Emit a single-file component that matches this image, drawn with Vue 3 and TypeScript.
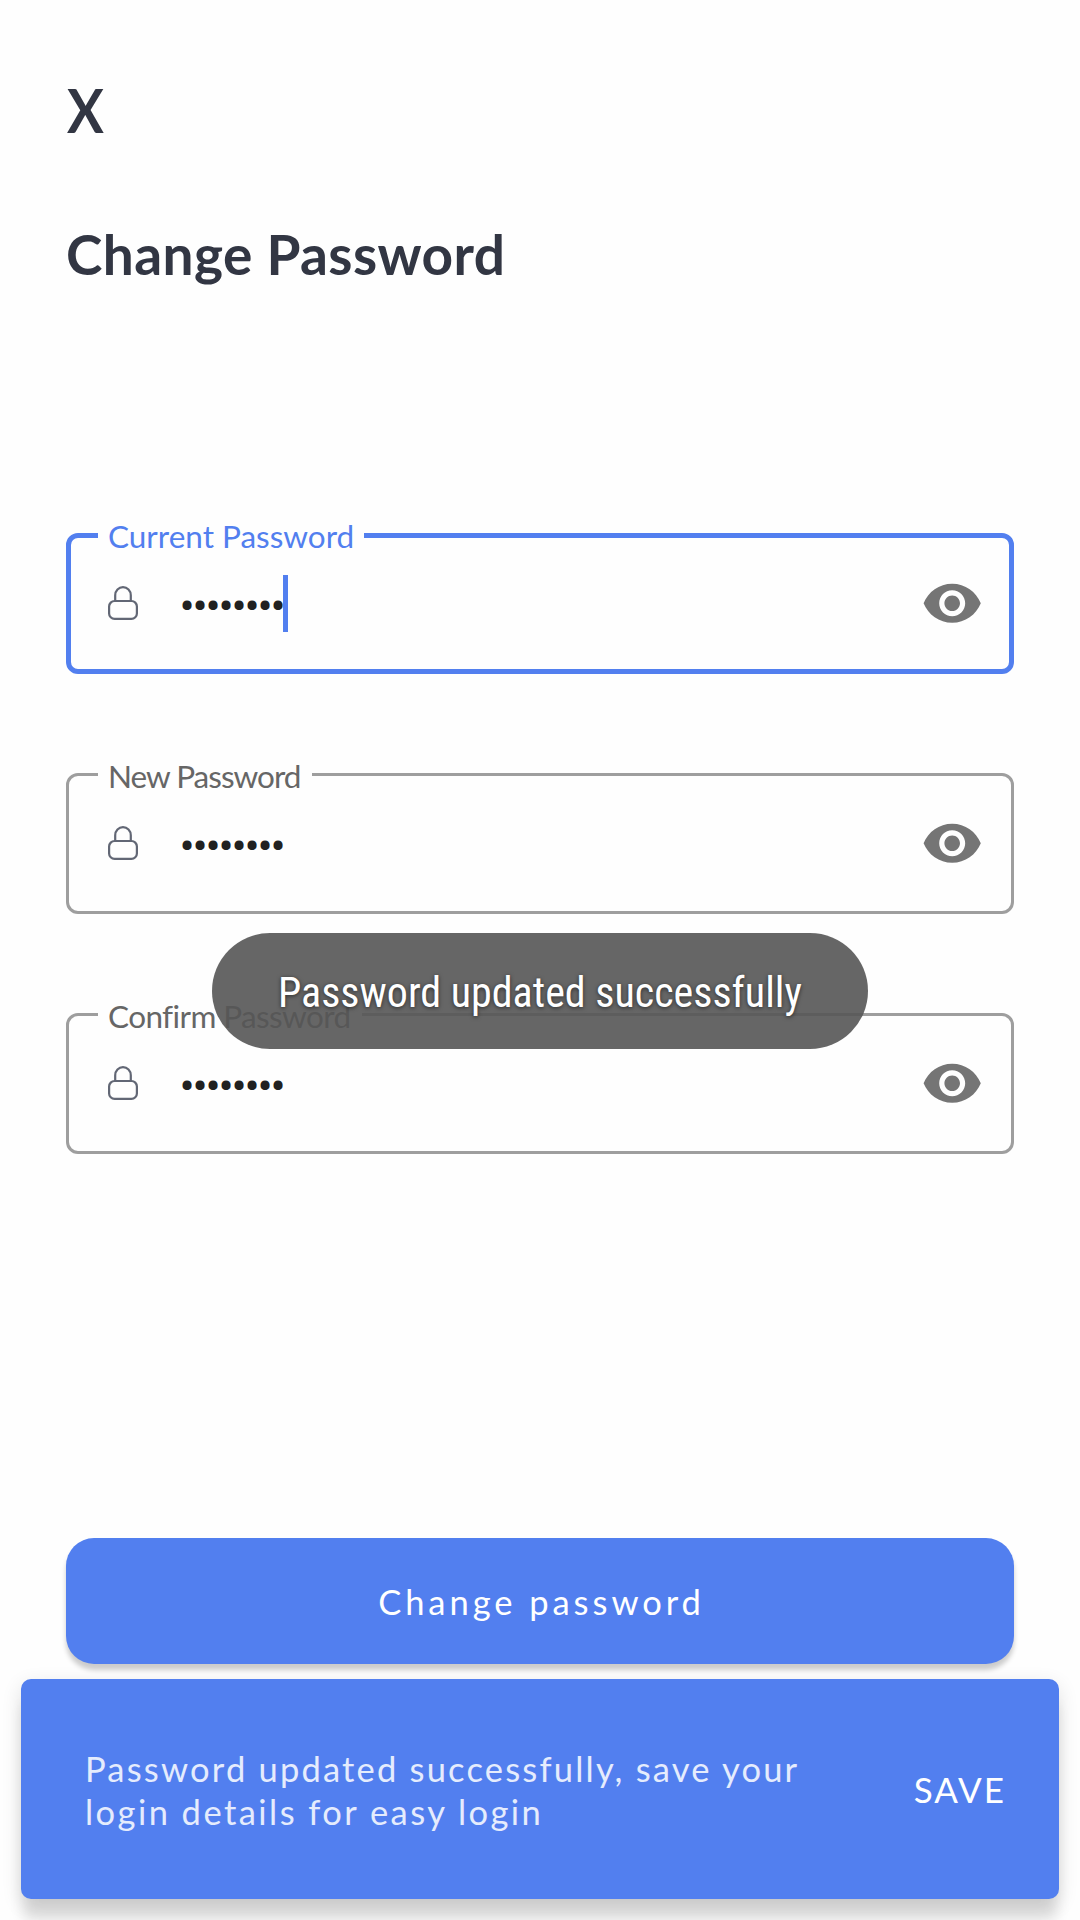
<script setup lang="ts">
import { ref } from 'vue'

interface Field {
  id: string
  label: string
  value: string
  focused: boolean
}

const fields = ref<Field[]>([
  { id: 'current', label: 'Current Password', value: '••••••••', focused: true },
  { id: 'new', label: 'New Password', value: '••••••••', focused: false },
  { id: 'confirm', label: 'Confirm Password', value: '••••••••', focused: false },
])
</script>

<template>
  <main class="screen">
    <div class="close"><span>X</span></div>
    <h1 class="title"><span>Change Password</span></h1>

    <section class="fields">
      <div v-for="f in fields" :key="f.id" class="field" :class="[f.id, { focused: f.focused }]">
        <div class="label"><span>{{ f.label }}</span></div>
        <svg class="lock" viewBox="0 0 30 34" fill="none" stroke="#626775" stroke-width="2.2">
          <rect x="1.1" y="15" width="27.8" height="17.9" rx="5.5" />
          <path d="M7.2 15V9.2a7.8 8.1 0 0 1 15.6 0V15" />
        </svg>
        <span class="dots">{{ f.value }}</span>
        <i v-if="f.focused" class="caret"></i>
        <svg class="eye" viewBox="0 0 24 24" fill="#757575">
          <path d="M12 4.5C7 4.5 2.73 7.61 1 12c1.73 4.39 6 7.5 11 7.5s9.27-3.11 11-7.5c-1.73-4.39-6-7.5-11-7.5zM12 17c-2.76 0-5-2.24-5-5s2.24-5 5-5 5 2.24 5 5-2.24 5-5 5zm0-8c-1.66 0-3 1.34-3 3s1.34 3 3 3 3-1.34 3-3-1.34-3-3-3z" />
        </svg>
      </div>
    </section>

    <div class="submit"><span>Change password</span></div>

    <div class="snackbar">
      <p class="message">
        <span class="l1">Password updated successfully, save your</span><br />
        <span class="l2">login details for easy login</span>
      </p>
      <span class="action">SAVE</span>
    </div>

    <div class="toast"><span>Password updated successfully</span></div>
  </main>
</template>

<style>
body {
  margin: 0;
  background: #fefefe;
}
</style>

<style scoped>
.screen {
  position: relative;
  box-sizing: border-box;
  width: 1080px;
  height: 1920px;
  padding: 80px 66px 0;
  overflow: hidden;
  background: #fefefe;
  font-family: Lato, 'Open Sans', sans-serif;
  display: flex;
  flex-direction: column;
}
.close {
  height: 60px;
  line-height: 60px;
  font-size: 61px;
  font-weight: 700;
  color: #323643;
}
.close span {
  display: inline-block;
  transform: translateX(1px) scaleX(0.9);
  transform-origin: left;
}
.title {
  margin: 84px 0 0;
  height: 60px;
  line-height: 60px;
  font-size: 55px;
  font-weight: 700;
  letter-spacing: 0.4px;
  color: #323643;
  white-space: nowrap;
}
.fields {
  margin-top: 249px;
  display: flex;
  flex-direction: column;
  gap: 99px;
}
.field {
  position: relative;
  box-sizing: border-box;
  height: 141px;
  border: 3px solid #9e9e9e;
  border-radius: 12px;
  padding: 0 28px 0 39px;
  display: flex;
  align-items: center;
}
.field.focused {
  border: 5px solid #527fef;
  padding: 0 26px 0 37px;
}
.label {
  position: absolute;
  left: 29px;
  top: -20px;
  box-sizing: border-box;
  height: 40px;
  width: 214px;
  padding-left: 10px;
  line-height: 40px;
  font-size: 31.5px;
  letter-spacing: -1px;
  white-space: nowrap;
  background: #fefefe;
  color: #666;
}
.focused .label {
  left: 27px;
  top: -22px;
  width: 266px;
  letter-spacing: 0;
  color: #527fef;
}
.confirm .label {
  width: 264px;
  letter-spacing: -0.6px;
}
.lock {
  width: 30px;
  height: 34px;
  margin-bottom: 1px;
}
.dots {
  margin: 7px 0 0 41.5px;
  width: 103.5px;
  font-family: Roboto, sans-serif;
  font-size: 45px;
  letter-spacing: -2.17px;
  line-height: 50px;
  color: #212121;
}
.caret {
  width: 5px;
  height: 57px;
  background: #527fef;
}
.eye {
  margin-left: auto;
  width: 62.4px;
  height: 62.4px;
}
.submit {
  margin-top: 384px;
  height: 126px;
  box-sizing: border-box;
  padding-left: 3px;
  border-radius: 28px;
  background: #527fef;
  box-shadow: 0 6px 5px rgba(0, 0, 0, 0.2);
  display: flex;
  align-items: center;
  justify-content: center;
  font-size: 34.5px;
  letter-spacing: 3.95px;
  color: #fff;
  flex: none;
}
.snackbar {
  flex: none;
  box-sizing: border-box;
  margin: 15px -45px 0;
  height: 220px;
  padding: 0 53px 0 64px;
  border-radius: 10px;
  background: #527fef;
  box-shadow: 0 23px 14px -2px rgba(0, 0, 0, 0.12), 0 6px 20px rgba(0, 0, 0, 0.12);
  display: flex;
  align-items: center;
  justify-content: space-between;
}
.message {
  margin: 1px 0 0;
  font-size: 34.5px;
  line-height: 43px;
  letter-spacing: 2.2px;
  white-space: nowrap;
  color: #e5ecfd;
}
.l2 {
  letter-spacing: 2.45px;
}
.action {
  font-size: 35px;
  letter-spacing: 2px;
  color: #fff;
}
.toast {
  position: absolute;
  left: 212px;
  top: 933px;
  width: 656px;
  height: 116px;
  border-radius: 58px;
  background: rgba(85, 85, 85, 0.9);
  display: flex;
  align-items: center;
  justify-content: center;
  font-family: 'Roboto Condensed', Roboto, sans-serif;
  font-size: 42px;
  color: #fff;
  text-shadow: 0 1px 4px rgba(0, 0, 0, 0.6);
  white-space: nowrap;
}
.toast span {
  margin-top: 3px;
}
</style>
